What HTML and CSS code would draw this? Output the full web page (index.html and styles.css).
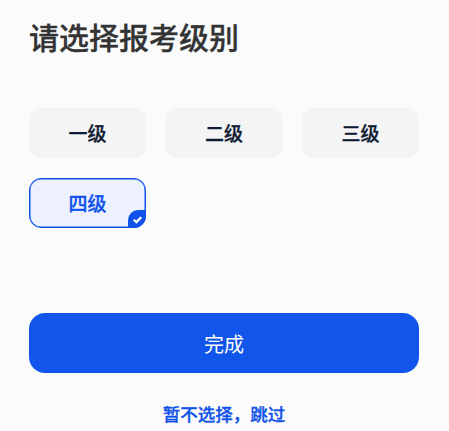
FILE: index.html
```html
<!DOCTYPE html>
<html lang="zh-CN">
<head>
    <meta charset="UTF-8">
    <meta name="viewport" content="width=device-width, initial-scale=1.0">
    <title>请选择报考级别</title>
    <link rel="stylesheet" href="styles.css">
</head>
<body>
    <div class="page">
        <h1>请选择报考级别</h1>
        <div class="levels">
            <div class="level">一级</div>
            <div class="level">二级</div>
            <div class="level">三级</div>
            <div class="level selected">
                四级
                <span class="tick">
                    <svg width="11" height="11" viewBox="0 0 10 10">
                        <path d="M1.6 5.2 L4 7.4 L8.4 2.9" fill="none" stroke="#fff" stroke-width="2"/>
                    </svg>
                </span>
            </div>
        </div>
        <button class="done">完成</button>
        <div class="skip">暂不选择&#xFF0C;跳过</div>
    </div>
</body>
</html>
```

FILE: styles.css
```css
body {
    font-family: "Noto Sans CJK SC", "Noto Sans", sans-serif;
    background-color: #fbfbfc;
    margin: 0;
    padding: 0;
}
.page {
    height: 431px;
    padding: 15px 30px 0 29px;
    box-sizing: border-box;
    overflow: hidden;
}
h1 {
    margin: 0;
    font-size: 30px;
    line-height: 42px;
    font-weight: 500;
    -webkit-text-stroke: 0.3px #333333;
    color: #333333;
}
.levels {
    display: grid;
    grid-template-columns: repeat(3, 1fr);
    column-gap: 19.4px;
    row-gap: 20px;
    margin-top: 51px;
}
.level {
    position: relative;
    height: 50px;
    line-height: 50px;
    text-align: center;
    font-size: 19px;
    font-weight: 500;
    -webkit-text-stroke: 0.3px;
    color: #0f1a33;
    background-color: #f4f4f5;
    border-radius: 12px;
    box-sizing: border-box;
}
.level.selected {
    line-height: 48px;
    color: #0f52e8;
    background-color: #edf1fd;
    border: 1px solid #0f52e8;
    box-shadow: inset 0 0 0 0.5px #0f52e8;
}
.tick {
    position: absolute;
    right: -1px;
    bottom: -1px;
    width: 18px;
    height: 18px;
    display: flex;
    align-items: center;
    justify-content: center;
    background-color: #1152ea;
    border-radius: 10px 0 12px 0;
}
.done {
    display: block;
    width: 390px;
    height: 60px;
    margin-top: 85px;
    border: none;
    border-radius: 16px;
    background-color: #1155ea;
    color: #fff;
    font-family: inherit;
    font-size: 20px;
}
.skip {
    margin-top: 29px;
    text-align: center;
    font-size: 17.5px;
    line-height: 24px;
    font-weight: 500;
    -webkit-text-stroke: 0.3px;
    color: #0f52e8;
}
```
